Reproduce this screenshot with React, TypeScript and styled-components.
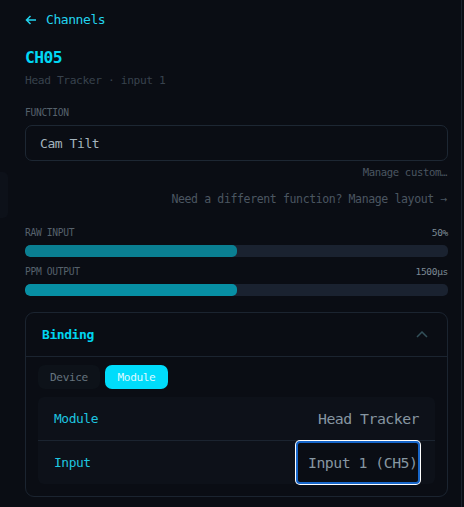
import styled, { createGlobalStyle, css } from 'styled-components'

// the reference mono face is a touch narrower than DejaVu: grow it slightly, pull the advance back
const mono = (px: number) => css`
  font-size: ${(px * 1.06).toFixed(2)}px;
  letter-spacing: ${(-px * 0.602 * 0.06).toFixed(2)}px;
`

const GlobalStyle = createGlobalStyle`
  html, body {
    margin: 0;
    padding: 0;
    background: #0a0d14;
  }
  body {
    font-family: "DejaVu Sans Mono", "Liberation Mono", monospace;
  }
  * {
    box-sizing: border-box;
  }
`

const Panel = styled.div`
  position: relative;
  width: 462px;
  min-height: 507px;
  padding: 12px 13px 0 25px;
  border-right: 1px solid #1a212c;
  display: flex;
  flex-direction: column;
`

const EdgeTab = styled.div`
  position: absolute;
  left: 0;
  top: 172px;
  width: 8px;
  height: 46px;
  background: #0d1119;
  border-radius: 0 5px 5px 0;
`

const BackLink = styled.a`
  display: flex;
  align-items: center;
  gap: 9px;
  ${mono(12.3)}
  line-height: 16px;
  color: #22d3ee;
  text-decoration: none;
`

const Title = styled.h1`
  margin: 20px 0 0;
  ${mono(15.4)}
  line-height: 20px;
  font-weight: bold;
  color: #00d8f5;
`

const Subtitle = styled.div`
  margin-top: 6px;
  ${mono(10.6)}
  line-height: 14px;
  color: #38424d;
`

const FieldLabel = styled.div<{ $top?: number }>`
  margin-top: ${({ $top }) => $top ?? 0}px;
  ${mono(9.1)}
  line-height: 12px;
  text-transform: uppercase;
  color: #56616c;
`

const Select = styled.div`
  margin-top: 6px;
  height: 36px;
  display: flex;
  align-items: center;
  padding: 0 14px;
  border: 1px solid #1d2733;
  border-radius: 7px;
  ${mono(12.3)}
  color: #a3b3bd;
`

const HintLink = styled.div<{ $top: number; $size: number }>`
  margin-top: ${({ $top }) => $top}px;
  align-self: flex-end;
  padding-right: 1px;
  ${({ $size }) => mono($size)}
  line-height: 14px;
  color: #4b5661;
`

const MeterHead = styled.div<{ $top: number }>`
  margin-top: ${({ $top }) => $top}px;
  display: flex;
  justify-content: space-between;
  align-items: center;
`

const MeterValue = styled.span`
  ${mono(9)}
  line-height: 12px;
  color: #7c8a95;
`

const Track = styled.div`
  margin-top: 6px;
  height: 12px;
  border-radius: 5px;
  background: #1a2230;
  overflow: hidden;
`

const Fill = styled.div<{ $color: string }>`
  height: 100%;
  border-radius: 5px;
  background: ${({ $color }) => $color};
`

const Card = styled.section`
  margin-top: 16px;
  border: 1px solid #1b2430;
  border-radius: 9px;
  padding-bottom: 12px;
`

const CardHeader = styled.div`
  height: 44px;
  display: flex;
  align-items: center;
  justify-content: space-between;
  padding: 0 19px 0 16px;
  border-bottom: 1px solid #1b2430;
`

const CardTitle = styled.h2`
  margin: 0;
  ${mono(12.3)}
  font-weight: bold;
  color: #00d4f0;
`

const Tabs = styled.div`
  display: flex;
  gap: 5px;
  padding: 8px 12px 0;
`

const Tab = styled.div<{ $active?: boolean }>`
  width: ${({ $active }) => ($active ? 63 : 62)}px;
  height: 24px;
  display: flex;
  align-items: center;
  justify-content: center;
  border-radius: 7px;
  ${mono(10.5)}
  background: ${({ $active }) => ($active ? '#00dcfb' : '#0d1219')};
  color: ${({ $active }) => ($active ? '#dcf9ff' : '#66747f')};
`

const Table = styled.div`
  margin: 8px 12px 0;
  background: #0d1119;
  border-radius: 6px;
`

const Row = styled.div`
  height: 43px;
  display: flex;
  align-items: center;
  justify-content: space-between;
  padding: 0 15px 0 16px;
  & + & {
    border-top: 1px solid #1b2430;
    height: 44px;
    align-items: flex-end;
  }
`

const RowLabel = styled.span`
  ${mono(12.2)}
  color: #1ec6e0;
  align-self: center;
`

const RowValue = styled.span`
  ${mono(14)}
  padding-right: 1px;
  color: #8696a1;
`

const FocusedSelect = styled.div`
  width: 124px;
  height: 43px;
  display: flex;
  align-items: center;
  padding-left: 10px;
  white-space: nowrap;
  overflow: hidden;
  border: 2px solid #1766c9;
  border-radius: 4px;
  box-shadow: 0 0 0 1px #ffffff;
  background: #0a0d14;
  ${mono(14)}
  color: #8696a1;
`

function ArrowLeft() {
  return (
    <svg width="12" height="10" viewBox="0 0 12 10" fill="none" stroke="#22d3ee" strokeWidth="1.5">
      <path d="M11 5H1.5M5.5 1L1.5 5l4 4" />
    </svg>
  )
}

function ChevronUp() {
  return (
    <svg width="12" height="7" viewBox="0 0 12 7" fill="none" stroke="#33505a" strokeWidth="1.5">
      <path d="M1 6l5-5 5 5" />
    </svg>
  )
}

export default function App() {
  return (
    <>
      <GlobalStyle />
      <Panel>
        <EdgeTab />
        <BackLink href="#">
          <ArrowLeft />
          Channels
        </BackLink>
        <Title>CH05</Title>
        <Subtitle>Head Tracker · input 1</Subtitle>

        <FieldLabel $top={19}>Function</FieldLabel>
        <Select>Cam Tilt</Select>
        <HintLink $top={4} $size={10}>Manage custom…</HintLink>
        <HintLink $top={13} $size={10.9}>Need a different function? Manage layout →</HintLink>

        <MeterHead $top={21}>
          <FieldLabel>Raw input</FieldLabel>
          <MeterValue>50%</MeterValue>
        </MeterHead>
        <Track>
          <Fill $color="#0a7f92" style={{ width: '50%' }} />
        </Track>

        <MeterHead $top={9}>
          <FieldLabel>PPM output</FieldLabel>
          <MeterValue>1500µs</MeterValue>
        </MeterHead>
        <Track>
          <Fill $color="#078fa4" style={{ width: '50%' }} />
        </Track>

        <Card>
          <CardHeader>
            <CardTitle>Binding</CardTitle>
            <ChevronUp />
          </CardHeader>
          <Tabs>
            <Tab>Device</Tab>
            <Tab $active>Module</Tab>
          </Tabs>
          <Table>
            <Row>
              <RowLabel>Module</RowLabel>
              <RowValue>Head Tracker</RowValue>
            </Row>
            <Row>
              <RowLabel>Input</RowLabel>
              <FocusedSelect>Input 1 (CH5)</FocusedSelect>
            </Row>
          </Table>
        </Card>
      </Panel>
    </>
  )
}
